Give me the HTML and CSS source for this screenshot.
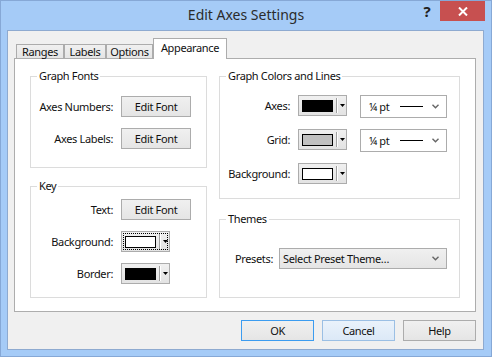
FILE: index.html
```html
<!DOCTYPE html>
<html>
<head>
<meta charset="utf-8">
<link rel="stylesheet" href="styles.css">
</head>
<body>
<div class="window">
  <div class="titlebar">
    <div class="title">Edit Axes Settings</div>
    <div class="controls">
      <div class="help-btn">?</div>
      <div class="close-btn">
        <svg width="10" height="9" viewBox="0 0 10 9"><path d="M1 0.5 L9 8.5 M9 0.5 L1 8.5" stroke="#fff" stroke-width="2"/></svg>
      </div>
    </div>
  </div>
  <div class="client">
    <div class="tabs">
      <div class="tab t-ranges">Ranges</div>
      <div class="tab t-labels">Labels</div>
      <div class="tab t-options">Options</div>
      <div class="tab t-appearance active">Appearance</div>
    </div>
    <div class="panel">
      <div class="col col-left">
        <div class="group g-fonts">
          <span class="legend">Graph Fonts</span>
          <div class="form form-left">
            <span class="lbl">Axes Numbers:</span><button class="btn">Edit Font</button>
            <span class="lbl">Axes Labels:</span><button class="btn">Edit Font</button>
          </div>
        </div>
        <div class="group g-key">
          <span class="legend">Key</span>
          <div class="form form-left">
            <span class="lbl">Text:</span><button class="btn">Edit Font</button>
            <span class="lbl">Background:</span>
            <div class="picker focused"><span class="swatch sw-white"></span><span class="sep"></span><svg class="arrow" width="5" height="3" viewBox="0 0 5 3"><path d="M0 0 H5 L2.5 3 Z" fill="#000"/></svg></div>
            <span class="lbl">Border:</span>
            <div class="picker"><span class="swatch sw-black"></span><span class="sep"></span><svg class="arrow" width="5" height="3" viewBox="0 0 5 3"><path d="M0 0 H5 L2.5 3 Z" fill="#000"/></svg></div>
          </div>
        </div>
      </div>
      <div class="col col-right">
        <div class="group g-colors">
          <span class="legend">Graph Colors and Lines</span>
          <div class="form form-colors">
            <span class="lbl">Axes:</span>
            <div class="picker"><span class="swatch sw-black"></span><span class="sep"></span><svg class="arrow" width="5" height="3" viewBox="0 0 5 3"><path d="M0 0 H5 L2.5 3 Z" fill="#000"/></svg></div>
            <div class="linesel"><span class="lw">¼ pt</span><span class="line"></span><svg class="chev" width="7" height="5" viewBox="0 0 7 5"><path d="M0.5 0.8 L3.5 3.8 L6.5 0.8" fill="none" stroke="#666" stroke-width="1.4"/></svg></div>
            <span class="lbl">Grid:</span>
            <div class="picker"><span class="swatch sw-gray"></span><span class="sep"></span><svg class="arrow" width="5" height="3" viewBox="0 0 5 3"><path d="M0 0 H5 L2.5 3 Z" fill="#000"/></svg></div>
            <div class="linesel"><span class="lw">¼ pt</span><span class="line"></span><svg class="chev" width="7" height="5" viewBox="0 0 7 5"><path d="M0.5 0.8 L3.5 3.8 L6.5 0.8" fill="none" stroke="#666" stroke-width="1.4"/></svg></div>
            <span class="lbl">Background:</span>
            <div class="picker"><span class="swatch sw-white"></span><span class="sep"></span><svg class="arrow" width="5" height="3" viewBox="0 0 5 3"><path d="M0 0 H5 L2.5 3 Z" fill="#000"/></svg></div>
          </div>
        </div>
        <div class="group g-themes">
          <span class="legend">Themes</span>
          <div class="form form-themes">
            <span class="lbl">Presets:</span>
            <div class="select"><span>Select Preset Theme…</span><svg class="chev" width="7" height="5" viewBox="0 0 7 5"><path d="M0.5 0.8 L3.5 3.8 L6.5 0.8" fill="none" stroke="#666" stroke-width="1.4"/></svg></div>
          </div>
        </div>
      </div>
    </div>
    <div class="actions">
      <button class="btn dlg default">OK</button>
      <button class="btn dlg hover">Cancel</button>
      <button class="btn dlg">Help</button>
    </div>
  </div>
</div>
</body>
</html>
```

FILE: styles.css
```css
* { box-sizing: border-box; }
html, body { margin: 0; padding: 0; }
body {
  font-family: "Noto Sans", "Open Sans", sans-serif;
  font-size: 11px;
  letter-spacing: -0.35px;
  color: #111;
  background: #a5cbf7;
}
.window {
  width: 492px;
  height: 357px;
  border: 1px solid #86a8d6;
  background: #a5cbf7;
  display: flex;
  flex-direction: column;
}
.titlebar {
  height: 29px;
  flex: none;
  display: grid;
  grid-template-columns: 1fr auto 1fr;
}
.title {
  grid-column: 2;
  font-size: 14px;
  letter-spacing: 0;
  line-height: 28px;
  color: #2b2b2b;
  white-space: nowrap;
}
.controls {
  grid-column: 3;
  justify-self: end;
  align-self: start;
  display: flex;
  margin-right: 6px;
}
.help-btn {
  width: 26px;
  height: 20px;
  font-size: 15px;
  font-weight: bold;
  letter-spacing: 0;
  line-height: 20px;
  text-align: center;
  color: #222;
}
.close-btn {
  width: 45px;
  height: 20px;
  background: #c75050;
  display: flex;
  align-items: center;
  justify-content: center;
}
.client {
  flex: none;
  height: 320px;
  margin: 0 7px 6px 6px;
  border: 1px solid #8eaad0;
  background: #f0f0f0;
  padding: 7px 7px 8px 6px;
  display: flex;
  flex-direction: column;
}
.tabs {
  height: 20px;
  display: flex;
  align-items: flex-end;
  padding-left: 2px;
  position: relative;
  z-index: 1;
}
.tab {
  height: 14px;
  line-height: 13px;
  text-align: center;
  border: 1px solid #acacac;
  border-bottom: none;
  background: linear-gradient(#f0f0f0, #e5e5e5);
  white-space: nowrap;
}
.t-ranges { width: 48px; }
.t-labels { width: 42px; }
.t-options { width: 47px; }
.t-appearance { width: 74px; }
.tab.active {
  height: 21px;
  margin-bottom: -1px;
  line-height: 18px;
  background: #fff;
}
.panel {
  height: 254px;
  border: 1px solid #adadad;
  background: #fff;
  display: flex;
  gap: 12px;
  padding: 17px 15px 0 15px;
}
.col {
  display: flex;
  flex-direction: column;
}
.col-left { width: 177px; gap: 18px; }
.col-right { width: 241px; gap: 20px; }
.group {
  position: relative;
  border: 1px solid #dcdcdc;
}
.legend {
  position: absolute;
  left: 6px;
  top: -9px;
  padding: 0 2px;
  background: #fff;
  line-height: 16px;
  color: #111;
}
.g-fonts { height: 92px; padding-top: 19px; }
.g-key { height: 112px; padding-top: 12px; }
.g-colors { height: 123px; padding-top: 18px; }
.g-themes { height: 79px; padding-top: 28px; }
.form {
  display: grid;
  align-items: start;
}
.form-left {
  grid-template-columns: 82px 70px;
  column-gap: 8px;
  row-gap: 11px;
}
.form-colors {
  grid-template-columns: 70px 49px 87px;
  column-gap: 8px;
  row-gap: 11px;
}
.form-colors .linesel { margin-left: 5px; }
.form-themes {
  grid-template-columns: 53px 168px;
  column-gap: 6px;
}
.lbl {
  text-align: right;
  line-height: 21px;
  white-space: nowrap;
}
.btn {
  font: inherit;
  letter-spacing: inherit;
  color: #111;
  height: 21px;
  width: 70px;
  padding: 0;
  border: 1px solid #acacac;
  background: linear-gradient(#f0f0f0, #e5e5e5);
  line-height: 19px;
}
.picker {
  width: 49px;
  height: 21px;
  border: 1px solid #acacac;
  background: linear-gradient(#f0f0f0, #e3e3e3);
  display: flex;
  align-items: center;
  padding-left: 3px;
}
.picker.focused {
  outline: 1px dotted #000;
  outline-offset: -3px;
}
.swatch {
  width: 31px;
  height: 12px;
  border: 1px solid #000;
}
.sw-black { background: #000; }
.sw-gray { background: #c0c0c0; }
.sw-white { background: #fff; }
.sep {
  width: 2px;
  height: 15px;
  margin-left: 3px;
  border-left: 1px solid #a0a0a0;
  border-right: 1px solid #fff;
}
.arrow { margin-left: 2px; }
.linesel {
  width: 87px;
  height: 23px;
  border: 1px solid #acacac;
  background: #fff;
  display: flex;
  align-items: center;
  padding-left: 8px;
}
.lw { width: 31px; }
.line {
  width: 23px;
  height: 1px;
  background: #000;
}
.linesel .chev { margin-left: auto; margin-right: 7px; }
.select {
  height: 21px;
  border: 1px solid #acacac;
  background: linear-gradient(#f0f0f0, #e5e5e5);
  display: flex;
  align-items: center;
  padding-left: 3px;
  white-space: nowrap;
}
.select .chev { margin-left: auto; margin-right: 7px; }
.actions {
  margin-top: 8px;
  display: flex;
  justify-content: flex-end;
  gap: 8px;
}
.btn.dlg { width: 73px; }
.btn.default { border-color: #3c9cf0; }
.btn.hover {
  border-color: #9bbfe4;
  background: linear-gradient(#eaf2fb, #dce9f7);
}
```
